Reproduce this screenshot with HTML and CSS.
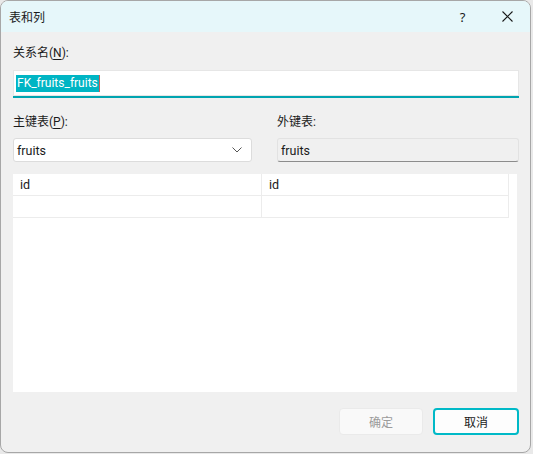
FILE: index.html
```html
<!DOCTYPE html>
<html lang="zh">
<head>
<meta charset="utf-8">
<title>表和列</title>
<link rel="stylesheet" href="styles.css">
</head>
<body>
<div class="dialog">
  <div class="titlebar">
    <span class="title">表和列</span>
    <div class="tb-buttons">
      <span class="tb-btn help">?</span>
      <span class="tb-btn close">
        <svg width="11" height="11" viewBox="0 0 11 11"><path d="M0.5 0.5 L10.5 10.5 M10.5 0.5 L0.5 10.5" stroke="#1a1a1a" stroke-width="1.1" fill="none"/></svg>
      </span>
    </div>
  </div>
  <div class="body">
    <div class="label name-label">关系名(<u>N</u>):</div>
    <div class="textbox"><span class="sel">FK_fruits_fruits</span><span class="caret"></span></div>
    <div class="two-col">
      <div class="col">
        <div class="label">主键表(<u>P</u>):</div>
        <div class="combo">
          <span>fruits</span>
          <svg class="chev" width="10" height="6" viewBox="0 0 10 6"><path d="M0.5 0.5 L5 5 L9.5 0.5" stroke="#555" stroke-width="1" fill="none"/></svg>
        </div>
      </div>
      <div class="col">
        <div class="label">外键表:</div>
        <div class="readonly">fruits</div>
      </div>
    </div>
    <div class="gridarea">
      <div class="grid">
        <div class="cell">id</div>
        <div class="cell">id</div>
        <div class="cell"></div>
        <div class="cell"></div>
      </div>
    </div>
    <div class="buttons">
      <button class="btn disabled">确定</button>
      <button class="btn primary">取消</button>
    </div>
  </div>
</div>
</body>
</html>
```
FILE: styles.css
```css
html, body {
  margin: 0;
  padding: 0;
  background: #e9e9e9;
}
body {
  font-family: Roboto, "Noto Sans CJK SC", sans-serif;
  font-size: 12px;
  color: #1a1a1a;
}
.dialog {
  box-sizing: border-box;
  width: 531px;
  height: 453px;
  border: 1px solid #a7a7a7;
  border-radius: 8px;
  background: #f0f0f0;
  overflow: hidden;
  display: flex;
  flex-direction: column;
}
.titlebar {
  height: 31px;
  flex: none;
  background: #e6f7fa;
  display: flex;
  align-items: center;
  justify-content: space-between;
}
.title {
  padding-left: 8px;
  font-family: "Noto Sans CJK SC", sans-serif;
  font-size: 12px;
  color: #1a1a1a;
}
.tb-buttons {
  display: flex;
  height: 100%;
}
.tb-btn {
  width: 46px;
  height: 100%;
  display: flex;
  align-items: center;
  justify-content: center;
}
.help {
  font-family: "Noto Sans", sans-serif;
  font-size: 13px;
  padding-left: 3px;
  box-sizing: border-box;
}
.body {
  flex: 1;
  display: flex;
  flex-direction: column;
  padding: 13px 11px 0 12px;
}
.label {
  font-family: Roboto, "Noto Sans CJK SC", sans-serif;
  font-size: 12px;
  line-height: 17px;
  height: 17px;
}
.label u {
  text-decoration-thickness: 1px;
  text-underline-offset: 2px;
}
.textbox {
  margin-top: 8px;
  height: 26px;
  background: #fff;
  border-bottom: 2px solid #00a4b0;
  display: flex;
  align-items: center;
  padding-left: 3px;
  box-shadow: 0 0 0 1px #e6e6e6 inset;
}
.sel {
  background: #00b5c4;
  color: #fff;
  font-size: 12px;
  line-height: 17px;
  padding: 0 1px;
}
.caret {
  width: 1px;
  height: 17px;
  background: #c8605a;
}
.two-col {
  margin-top: 16px;
  display: grid;
  grid-template-columns: 239px 242px;
  column-gap: 25px;
}
.col {
  display: flex;
  flex-direction: column;
}
.col .label {
  margin-bottom: 7px;
}
.combo {
  box-sizing: border-box;
  height: 24px;
  background: #fff;
  border: 1px solid #dcdcdc;
  border-radius: 3px;
  display: flex;
  align-items: center;
  justify-content: space-between;
  padding: 0 9px 0 3px;
  font-size: 12.5px;
}
.chev {
  display: block;
}
.readonly {
  box-sizing: border-box;
  height: 24px;
  background: #f0f0f0;
  border: 1px solid #e2e2e2;
  border-bottom: 1px solid #8c8c8c;
  border-radius: 3px;
  display: flex;
  align-items: center;
  padding-left: 3px;
  font-size: 12.5px;
}
.gridarea {
  margin-top: 12px;
  margin-right: 2px;
  height: 218px;
  background: #fff;
}
.grid {
  width: 496px;
  display: grid;
  grid-template-columns: 249px 247px;
  grid-auto-rows: 22px;
}
.cell {
  box-sizing: border-box;
  border-right: 1px solid #ececec;
  border-bottom: 1px solid #ececec;
  padding-left: 7px;
  display: flex;
  align-items: center;
  font-size: 12.5px;
}
.buttons {
  margin-top: 16px;
  display: flex;
  justify-content: flex-end;
  gap: 10px;
}
.btn {
  box-sizing: border-box;
  height: 27px;
  font-family: "Noto Sans CJK SC", sans-serif;
  font-size: 12px;
  border-radius: 4px;
  padding: 0;
}
.disabled {
  width: 84px;
  background: #f9f9f9;
  border: 1px solid #eaeaea;
  color: #9b9b9b;
}
.primary {
  width: 86px;
  background: #fdfdfd;
  border: 2px solid #00b9c7;
  color: #1a1a1a;
}
```
